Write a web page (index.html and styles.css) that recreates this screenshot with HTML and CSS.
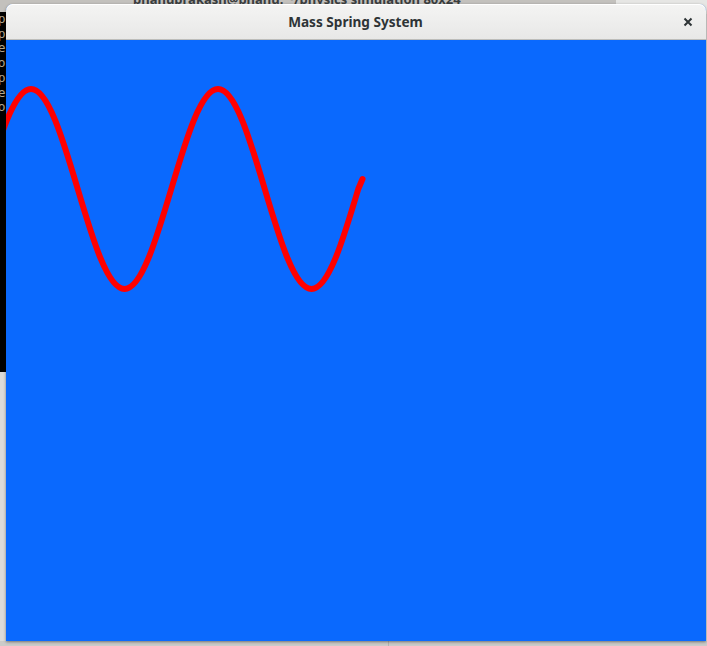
FILE: index.html
```html
<!DOCTYPE html>
<html>
<head>
<meta charset="utf-8">
<title>Mass Spring System</title>
<link rel="stylesheet" href="styles.css">
</head>
<body>
<div class="desktop">
  <div class="term-title"><span class="term-title-text">bhanuprakash@bhanu: ~/physics simulation 80x24</span></div>
  <div class="term-body">
    <div class="term-line">up</div>
    <div class="term-line">up</div>
    <div class="term-line">ne</div>
    <div class="term-line">&nbsp;o</div>
    <div class="term-line">up</div>
    <div class="term-line">ne</div>
    <div class="term-line">&nbsp;o</div>
  </div>
  <div class="right-top"></div>
  <div class="bottom-strip"><div class="bottom-divider"></div></div>

  <div class="window">
    <header class="titlebar">
      <span class="title">Mass Spring System</span>
      <button class="close" aria-label="Close">
        <svg width="10" height="10" viewBox="0 0 10 10"><path d="M1.5 1.5 L8.5 8.5 M8.5 1.5 L1.5 8.5" stroke="#2e3436" stroke-width="2" stroke-linecap="butt"/></svg>
      </button>
    </header>
    <main class="canvas">
      <svg class="wave" width="700" height="600" viewBox="0 0 700 600">
        <path d="M -21.75 149 C -6.52 97.8, 8.13 49, 25 49 C 41.87 49, 56.52 97.8, 71.75 149 C 86.98 200.2, 101.63 249, 118.5 249 C 135.37 249, 150.02 200.2, 165.25 149 C 180.48 97.8, 195.13 49, 212 49 C 228.87 49, 243.52 97.8, 258.75 149 C 273.98 200.2, 288.63 249, 305.5 249 C 322.37 249, 337.02 200.2, 352.25 149 L 356.5 139" fill="none" stroke="#ff0000" stroke-width="6" stroke-linecap="round" stroke-linejoin="round"/>
      </svg>
    </main>
  </div>
</div>
</body>
</html>
```

FILE: styles.css
```css
html, body {
  margin: 0;
  padding: 0;
}
body {
  width: 707px;
  height: 646px;
  overflow: hidden;
  background: #dcdbd8;
  font-family: "Noto Sans", "DejaVu Sans", sans-serif;
}
.desktop {
  position: relative;
  width: 707px;
  height: 646px;
  overflow: hidden;
}
.term-title {
  position: absolute;
  left: 0;
  top: 0;
  width: 616px;
  height: 14px;
  background: #c3c1bd;
  overflow: hidden;
}
.term-title-text {
  position: absolute;
  left: 133px;
  top: -10px;
  font-size: 13px;
  font-weight: bold;
  color: #3a3d3e;
  white-space: nowrap;
}
.term-body {
  position: absolute;
  left: 0;
  top: 12px;
  width: 388px;
  height: 360px;
  background: #000;
  overflow: hidden;
}
.term-line {
  font-family: "DejaVu Sans Mono", monospace;
  font-size: 13px;
  line-height: 14.7px;
  color: #b3a68c;
  margin-left: -10px;
  white-space: pre;
}
.right-top {
  position: absolute;
  left: 616px;
  top: 0;
  width: 91px;
  height: 14px;
  background: #e6e6e4;
}
.bottom-strip {
  position: absolute;
  left: 0;
  top: 641px;
  width: 707px;
  height: 5px;
  background: #cbcbc9;
}
.bottom-divider {
  position: absolute;
  left: 388px;
  top: 0;
  width: 1px;
  height: 5px;
  background: #b2b2b0;
}
.window {
  position: absolute;
  left: 6px;
  top: 4px;
  width: 700px;
  height: 637px;
  display: flex;
  flex-direction: column;
  border-radius: 7px 7px 0 0;
  box-shadow: 0 1px 3px rgba(0,0,0,0.45);
  background: #0a69fe;
}
.titlebar {
  height: 36px;
  flex: 0 0 36px;
  box-sizing: border-box;
  border-bottom: 1px solid #bdbdba;
  border-radius: 7px 7px 0 0;
  background: linear-gradient(#f4f4f3, #e8e8e7);
  box-shadow: inset 0 1px 0 #ffffff;
  display: flex;
  align-items: center;
  justify-content: center;
  position: relative;
}
.title {
  font-size: 13.6px;
  font-weight: bold;
  color: #2e3436;
  margin-left: -1px;
}
.close {
  position: absolute;
  right: 13px;
  top: 13px;
  width: 10px;
  height: 10px;
  padding: 0;
  border: 0;
  background: none;
  display: flex;
}
.canvas {
  flex: 1;
  background: #0a69fe;
  overflow: hidden;
}
.wave {
  display: block;
}
```
